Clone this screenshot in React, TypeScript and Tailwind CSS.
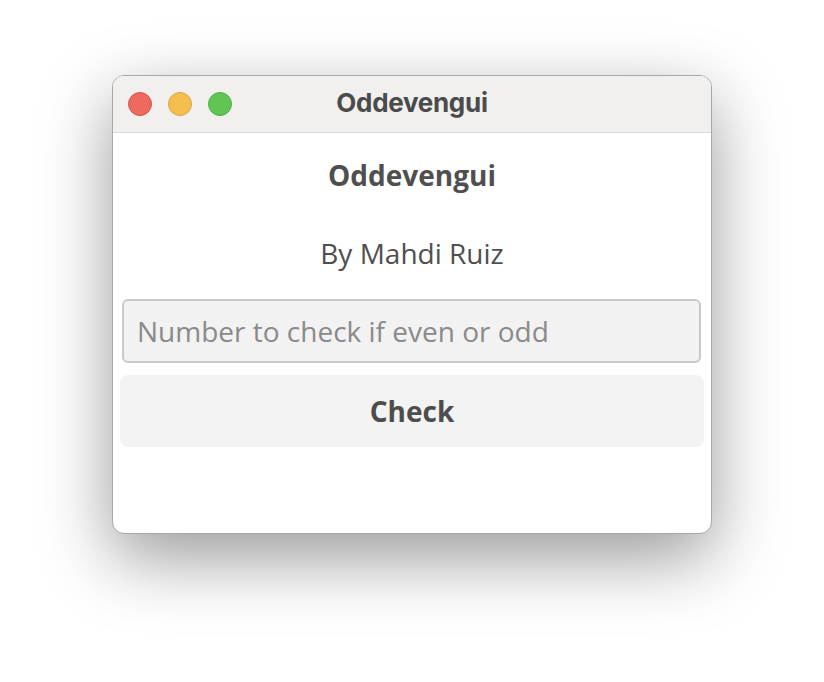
import React from "react";

export default function App() {
  return (
    <div className="w-[824px] h-[682px] bg-white pt-[75px] pl-[112px]" style={{ fontFamily: '"Open Sans", "Noto Sans", sans-serif' }}>
      <div className="w-[600px] h-[459px] rounded-[12px] bg-white overflow-hidden border border-[#a8a8a8] shadow-[0_24px_70px_rgba(0,0,0,0.4)] flex flex-col">
        <div className="h-[57px] shrink-0 bg-[#f1f0ef] border-b border-[#dcdbda] relative flex items-center justify-center pb-[3px]">
          <div className="absolute left-[15px] top-[16px] flex gap-[16px]">
            <div className="w-[24px] h-[24px] rounded-full bg-[#ee6a5f] border border-[#d5544a]" />
            <div className="w-[24px] h-[24px] rounded-full bg-[#f5bf4f] border border-[#d9a33d]" />
            <div className="w-[24px] h-[24px] rounded-full bg-[#61c554] border border-[#4fad44]" />
          </div>
          <span className="text-[26px] font-bold text-[#4b4b4b] tracking-[-0.3px]" style={{ fontFamily: 'Inter, "Liberation Sans", sans-serif' }}>Oddevengui</span>
        </div>
        <div className="flex flex-col">
          <div className="h-[84px] flex items-center justify-center text-[28px] font-bold text-[#4f4f4f]">Oddevengui</div>
          <div className="h-[72px] flex items-center justify-center text-[28px] text-[#4f4f4f]">By Mahdi Ruiz</div>
          <div className="mt-[10px] ml-[9px] mr-[10px] h-[64px] rounded-[6px] border-2 border-[#c9c9c9] bg-[#f2f2f2] flex items-center pl-[13px] text-[28px] text-[#8a8a8a]">
            Number to check if even or odd
          </div>
          <div className="mt-[12px] mx-[7px] h-[72px] rounded-[8px] bg-[#f3f3f3] flex items-center justify-center text-[28px] font-bold text-[#4d4d4d]">
            Check
          </div>
        </div>
      </div>
    </div>
  );
}
